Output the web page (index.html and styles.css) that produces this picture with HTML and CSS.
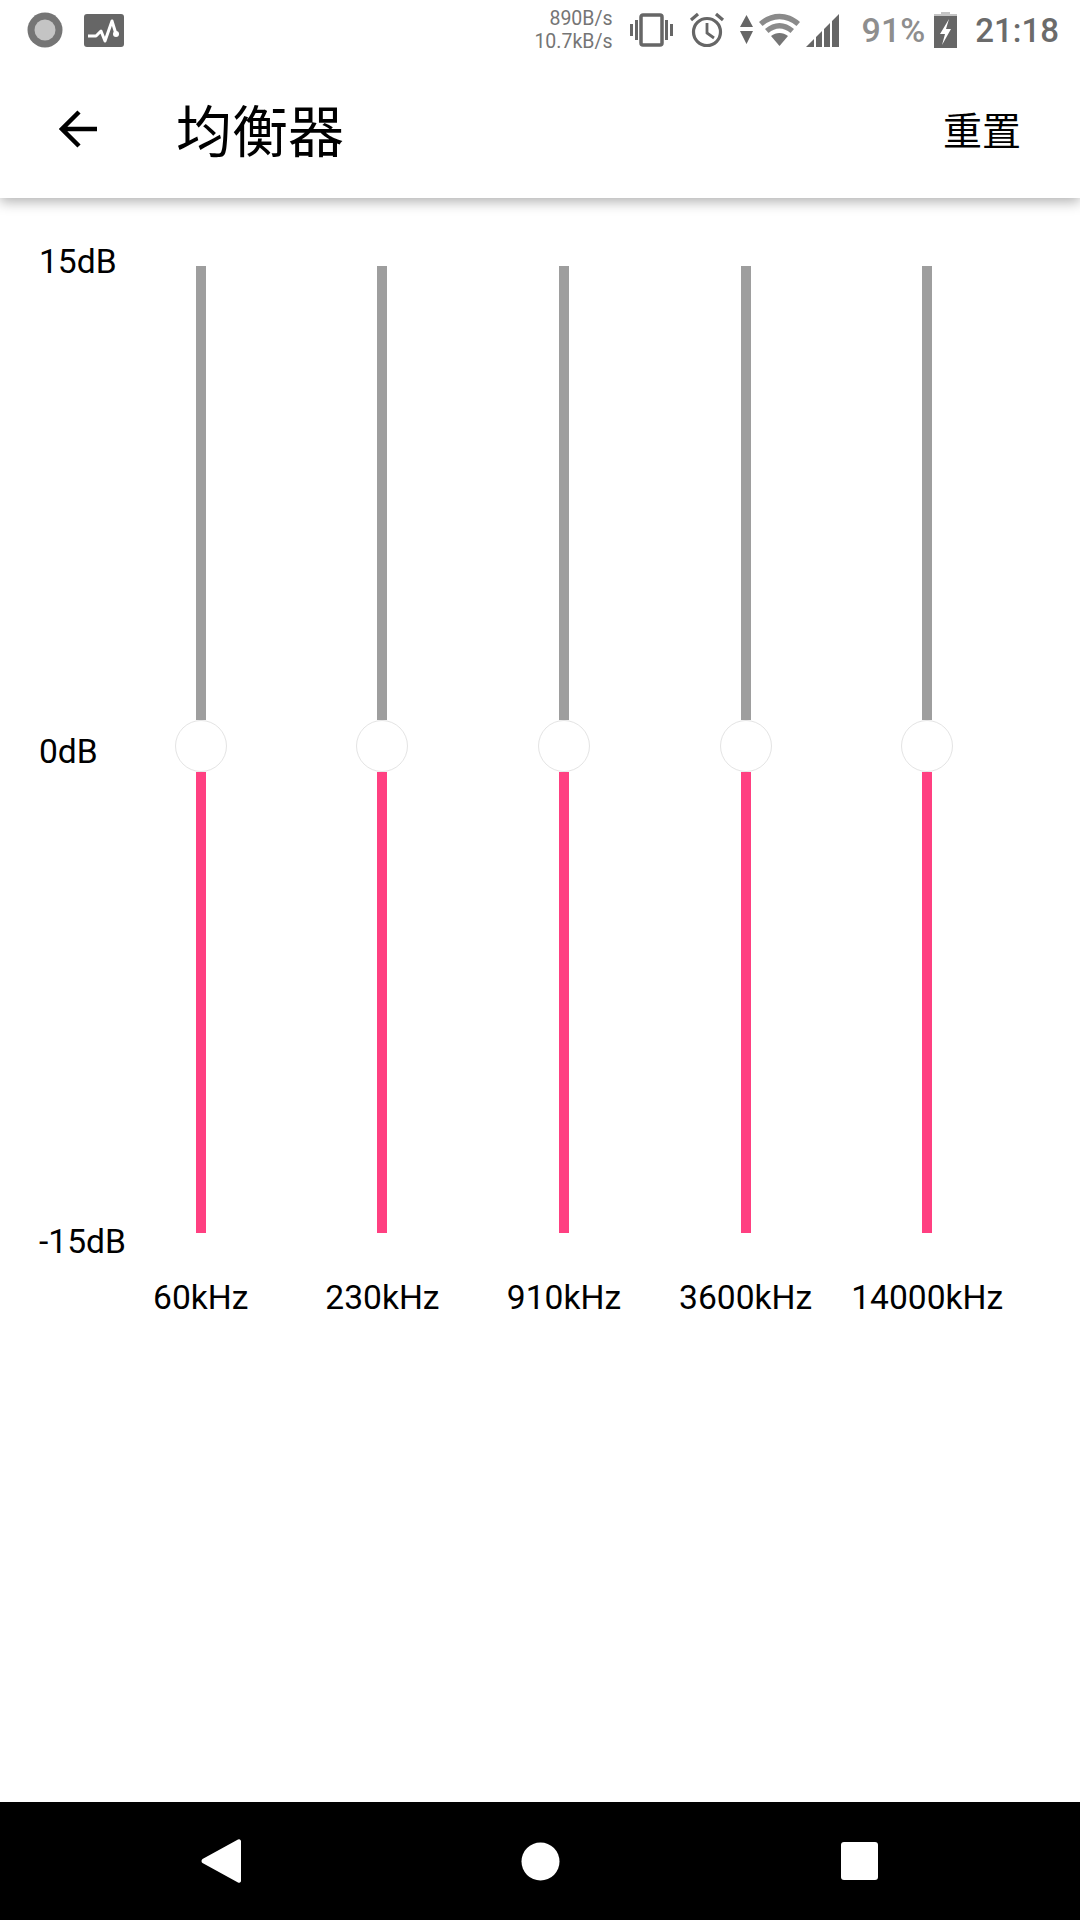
FILE: index.html
```html
<!DOCTYPE html>
<html lang="zh-CN">

<head>
    <meta charset="utf-8" />
    <title>均衡器</title>
    <link rel="stylesheet" href="styles.css">
</head>

<body>
    <div class="status-bar">
        <div class="status-left">
            <svg class="icon-record" width="36" height="36" viewBox="0 0 36 36">
                <circle cx="18" cy="18" r="17.5" fill="#757575" />
                <circle cx="18" cy="18" r="10.5" fill="#c4c4c4" />
            </svg>
            <svg class="icon-pulse" width="40" height="33" viewBox="0 0 40 33">
                <rect width="40" height="33" rx="3" fill="#666" />
                <path d="M4 22h8l5-5 4 10 7-20 4 13" fill="none" stroke="#fff" stroke-width="3" stroke-linejoin="round" />
                <circle cx="32" cy="20" r="3" fill="#fff" />
            </svg>
        </div>
        <div class="status-right">
            <div class="net-speed">
                <div>890B/s</div>
                <div>10.7kB/s</div>
            </div>
            <svg class="icon-vibrate" width="45" height="34" viewBox="0 0 45 34">
                <rect x="12" y="2" width="21" height="30" rx="2" fill="none" stroke="#666" stroke-width="3.5" />
                <path d="M1 11h3v12h-3zM6 7h3v20h-3zM36 7h3v20h-3zM41 11h3v12h-3z" fill="#666" />
            </svg>
            <svg class="icon-alarm" width="36" height="36" viewBox="0 0 36 36">
                <circle cx="18" cy="20" r="13.5" fill="none" stroke="#666" stroke-width="3.2" />
                <path d="M18 11v10l7 5" fill="none" stroke="#666" stroke-width="2.8" />
                <path d="M2 8l7-6M34 8l-7-6" fill="none" stroke="#666" stroke-width="3.2" />
            </svg>
            <svg class="icon-arrows" width="13" height="30" viewBox="0 0 13 30">
                <path d="M6.5 0l6.5 12h-13zM0 16h13l-6.5 13z" fill="#666" />
            </svg>
            <svg class="icon-wifi" width="41" height="34" viewBox="0 0 41 34">
                <path d="M0 9C12-2 29-2 41 9l-3.500 4C27 4 14 4 3.500 13z" fill="#8a8a8a" />
                <path d="M6 16c9-8 20-8 29 0l-3.500 4c-7-6-15-6-22 0z" fill="#8a8a8a" />
                <path d="M12 23c5-4 12-4 17 0l-8.500 10z" fill="#757575" />
            </svg>
            <svg class="icon-signal" width="33" height="33" viewBox="0 0 33 33">
                <path d="M0 33L8 25v8zM10 23l6-6v16h-6zM18 15l6-6v24h-6zM26 7l7-7v33h-7z" fill="#666" />
            </svg>
            <span class="battery-text">91%</span>
            <svg class="icon-battery" width="23" height="36" viewBox="0 0 23 36">
                <path d="M7 0h9v2h7v3h-23v-3h7z" fill="#c4c4c4" />
                <path d="M0 4h23v32h-23z" fill="#666" />
                <path d="M15 7l-9 15h5l-3 11 9-16h-5z" fill="#fff" />
            </svg>
            <span class="clock">21:18</span>
        </div>
    </div>

    <div class="app-bar">
        <svg class="back" width="38" height="38" viewBox="0 0 38 38">
            <path d="M38 19H4M20 2L3 19l17 17" fill="none" stroke="#000" stroke-width="4.500" />
        </svg>
        <h1 class="title">均衡器</h1>
        <div class="reset">重置</div>
    </div>

    <div class="content">
        <div class="scale">
            <span>15dB</span>
            <span>0dB</span>
            <span>-15dB</span>
        </div>
        <div class="band">
            <div class="track-up"></div>
            <div class="thumb"></div>
            <div class="track-down"></div>
            <div class="freq">60kHz</div>
        </div>
        <div class="band">
            <div class="track-up"></div>
            <div class="thumb"></div>
            <div class="track-down"></div>
            <div class="freq">230kHz</div>
        </div>
        <div class="band">
            <div class="track-up"></div>
            <div class="thumb"></div>
            <div class="track-down"></div>
            <div class="freq">910kHz</div>
        </div>
        <div class="band">
            <div class="track-up"></div>
            <div class="thumb"></div>
            <div class="track-down"></div>
            <div class="freq">3600kHz</div>
        </div>
        <div class="band">
            <div class="track-up"></div>
            <div class="thumb"></div>
            <div class="track-down"></div>
            <div class="freq">14000kHz</div>
        </div>
    </div>

    <div class="nav-bar">
        <svg width="40" height="46" viewBox="0 0 40 46">
            <path d="M37 1.500L1.500 21a2.500 2.500 0 0 0 0 4L37 44.500a2 2 0 0 0 3-1.500V3a2 2 0 0 0-3-1.500z" fill="#fff" />
        </svg>
        <svg width="39" height="39" viewBox="0 0 40 40">
            <circle cx="20" cy="20" r="19.500" fill="#fff" />
        </svg>
        <svg width="37" height="38" viewBox="0 0 37 38">
            <rect width="37" height="38" rx="3" fill="#fff" />
        </svg>
    </div>
</body>

</html>
```

FILE: styles.css
```css
* {
    box-sizing: border-box;
}

body {
    margin: 0;
    width: 1080px;
    height: 1920px;
    display: flex;
    flex-direction: column;
    background: #fff;
    color: #000;
    font-family: Roboto, "Noto Sans CJK SC", sans-serif;
    overflow: hidden;
}

.status-bar {
    height: 60px;
    padding: 0 21px 0 27px;
    display: flex;
    justify-content: space-between;
    align-items: center;
    flex-shrink: 0;
}

.status-left {
    display: flex;
    align-items: center;
}

.icon-pulse {
    margin-left: 21px;
}

.status-right {
    display: flex;
    align-items: center;
}

.net-speed {
    width: 100px;
    text-align: right;
    font-size: 19.5px;
    line-height: 23px;
    color: #757575;
}

.icon-vibrate {
    margin-left: 16px;
}

.icon-alarm {
    margin-left: 15px;
}

.icon-arrows {
    margin-left: 15px;
}

.icon-wifi {
    margin-left: 6px;
}

.icon-signal {
    margin-left: 6px;
}

.battery-text {
    margin-left: 23px;
    font-size: 34px;
    font-weight: 500;
    color: #8e8e8e;
}

.icon-battery {
    margin-left: 9px;
}

.clock {
    margin-left: 18px;
    font-size: 33px;
    font-weight: 500;
    color: #6b6b6b;
}

.app-bar {
    height: 138px;
    padding: 0 59px;
    display: flex;
    align-items: center;
    background: #fff;
    box-shadow: 0 4px 12px rgba(0, 0, 0, 0.3);
    clip-path: inset(0 0 -30px 0);
    position: relative;
    flex-shrink: 0;
}

.title {
    margin: 0 0 4px 79px;
    flex-grow: 1;
    font-size: 56px;
    font-weight: 400;
}

.reset {
    margin-bottom: 2px;
    font-size: 39px;
}

.content {
    flex-grow: 1;
    padding-top: 42px;
    display: flex;
    align-items: flex-start;
}

.scale {
    width: 110px;
    height: 1024px;
    padding-left: 39px;
    display: flex;
    flex-direction: column;
    justify-content: space-between;
    font-size: 33.6px;
    line-height: 44px;
    white-space: nowrap;
}

.band {
    width: 181.6px;
    padding-top: 26px;
    display: flex;
    flex-direction: column;
    align-items: center;
}

.track-up {
    width: 10px;
    height: 454px;
    background: #9e9e9e;
}

.track-down {
    width: 10px;
    height: 461px;
    background: #ff4081;
}

.thumb {
    width: 52px;
    height: 52px;
    flex-shrink: 0;
    border: 1px solid #e4e4e4;
    border-radius: 50%;
    background: #fff;
}

.freq {
    margin-top: 43px;
    font-size: 33.6px;
    line-height: 44px;
    white-space: nowrap;
}

.nav-bar {
    height: 118px;
    padding: 0 61.5px;
    display: grid;
    grid-template-columns: repeat(3, 1fr);
    justify-items: center;
    align-items: center;
    background: #000;
    flex-shrink: 0;
}
```
